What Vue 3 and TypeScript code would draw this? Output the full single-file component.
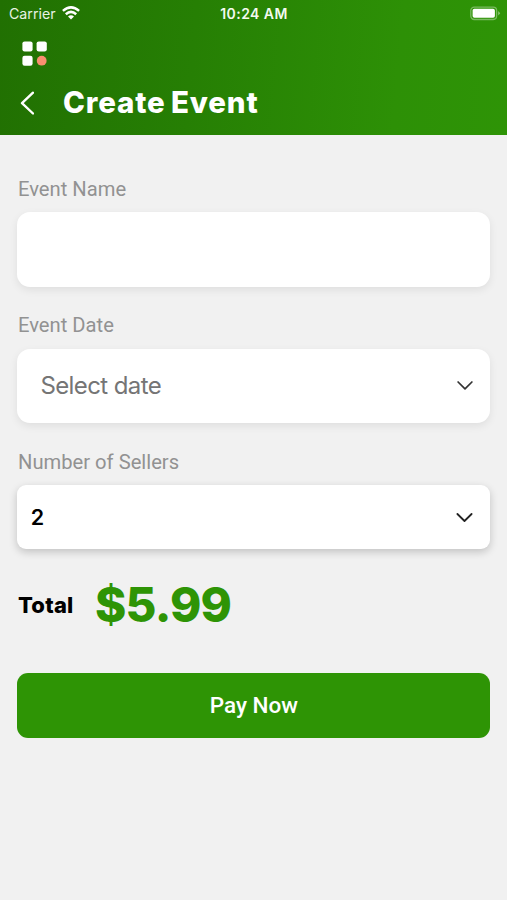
<script setup lang="ts">
import { ref } from 'vue'

const eventName = ref<string>('')
const sellers = ref<number>(2)
const total = ref<string>('$5.99')
</script>

<template>
  <div class="screen">
    <header class="header">
      <div class="status">
        <div class="carrier">
          <span class="carrier-name">Carrier</span>
          <svg class="wifi" width="18" height="14" viewBox="0 0 18 14" fill="none" stroke="#fff" stroke-width="2.5">
            <path d="M.9 4.9Q9-2.1 17.1 4.9" />
            <path d="M3.8 8.2Q9 3.6 14.2 8.2" />
            <path d="M9 13.6L6 10.5Q9 8.2 12 10.5Z" fill="#fff" stroke="none" />
          </svg>
        </div>
        <span class="time">10:24 AM</span>
        <svg class="battery" width="31" height="15" viewBox="0 0 31 15">
          <rect x=".8" y="1.1" width="25.8" height="12.4" rx="3.4" fill="none" stroke="#fff" stroke-opacity=".36" stroke-width="1.3" />
          <rect x="2.6" y="2.8" width="22.3" height="9" rx="1.8" fill="#fff" />
          <path d="M28.2 5L30.2 7.3L28.2 9.6Z" fill="#fff" fill-opacity=".45" />
        </svg>
      </div>
      <svg class="menu" width="25" height="25" viewBox="0 0 25 25" fill="#fff">
        <rect x=".4" y=".4" width="10.2" height="10" rx="2.2" />
        <rect x="14.6" y=".4" width="10.2" height="10" rx="2.2" />
        <rect x=".4" y="14.7" width="10.2" height="10" rx="2.2" />
        <circle cx="19.7" cy="19.7" r="4.9" fill="#f98f6f" />
      </svg>
      <div class="title-row">
        <svg class="back" width="14" height="24" viewBox="0 0 14 24" fill="none" stroke="#fff" stroke-width="2.4" stroke-linecap="round" stroke-linejoin="round">
          <path d="M13 1.7L2 12.1L13 22.5" />
        </svg>
        <h1 class="title">Create Event</h1>
      </div>
    </header>

    <main class="form">
      <label class="label" for="event-name">Event Name</label>
      <input id="event-name" v-model="eventName" class="field" type="text" />

      <span class="label date-label">Event Date</span>
      <div class="field">
        <span class="placeholder">Select date</span>
        <svg class="chevron" width="17" height="11" viewBox="0 0 17 11" fill="none" stroke="#333" stroke-width="1.7" stroke-linecap="round" stroke-linejoin="round">
          <path d="M2.1 2L9 8.9L15.9 2" />
        </svg>
      </div>

      <span class="label sellers-label">Number of Sellers</span>
      <div class="field compact">
        <span class="value">{{ sellers }}</span>
        <svg class="chevron" width="17" height="11" viewBox="0 0 17 11" fill="none" stroke="#222" stroke-width="1.8" stroke-linecap="round" stroke-linejoin="round">
          <path d="M1.4 2L8.5 9L15.6 2" />
        </svg>
      </div>

      <div class="total">
        <span class="total-label">Total</span>
        <span class="price">{{ total }}</span>
      </div>

      <button class="pay" type="button">Pay Now</button>
    </main>
  </div>
</template>

<style>
body {
  background: #f1f1f1;
}
</style>

<style scoped>
.screen {
  min-height: 900px;
  background: #f1f1f1;
  font-family: Roboto, sans-serif;
}
.header {
  box-sizing: border-box;
  height: 135px;
  background: linear-gradient(95deg, #217002 0%, #267f04 38%, #2d9006 78%, #2e9406 100%);
  color: #fff;
}
.status {
  display: grid;
  grid-template-columns: 1fr auto 1fr;
  align-items: center;
  height: 27px;
  padding: 0 6px 0 9px;
  font-family: Inter, sans-serif;
  font-size: 14px;
}
.carrier {
  display: flex;
  align-items: center;
  gap: 6px;
}
.carrier-name {
  color: #e8f3e4;
  font-size: 14.2px;
}
.wifi {
  margin-top: -1px;
}
.time {
  color: #f3faf0;
  font-size: 14px;
  font-weight: 600;
  letter-spacing: 0.45px;
  margin-left: -2px;
}
.battery {
  justify-self: end;
}
.menu {
  display: block;
  margin: 14px 0 0 22px;
}
.title-row {
  display: flex;
  align-items: center;
  gap: 29px;
  height: 40px;
  margin-top: 17px;
  padding-left: 20px;
}
.title {
  margin: -2px 0 0;
  font-family: Inter, sans-serif;
  font-size: 29.5px;
  font-weight: 800;
  line-height: 40px;
  letter-spacing: 0.85px;
  word-spacing: -2px;
  white-space: nowrap;
}
.form {
  display: flex;
  flex-direction: column;
  padding: 41px 16.6px 0 17.4px;
}
.label {
  padding-left: 0.6px;
  margin-bottom: 9px;
  color: #929292;
  font-size: 20.2px;
  line-height: 27px;
}
.date-label {
  margin-top: 25px;
  margin-bottom: 10px;
}
.sellers-label {
  margin-top: 26px;
}
.field {
  display: flex;
  align-items: center;
  justify-content: space-between;
  box-sizing: border-box;
  width: 100%;
  height: 74.5px;
  padding: 0 17px 0 23px;
  border: 0;
  border-radius: 13px;
  outline: 0;
  background: #fff;
  box-shadow: 0 3px 9px rgba(0, 0, 0, 0.08);
}
.placeholder {
  color: #757575;
  font-family: Inter, sans-serif;
  font-size: 24px;
  letter-spacing: -0.6px;
}
.compact {
  height: 64px;
  padding: 0 17px 0 13.4px;
  border-radius: 9px;
  box-shadow: 0 3px 8px rgba(0, 0, 0, 0.2);
}
.value {
  color: #000;
  font-family: Inter, sans-serif;
  font-size: 21.5px;
  font-weight: 600;
}
.total {
  display: flex;
  align-items: center;
  height: 60px;
  margin-top: 25px;
  font-family: Inter, sans-serif;
  font-weight: 800;
}
.total-label {
  width: 77.6px;
  padding: 1px 0 0 0.6px;
  box-sizing: border-box;
  color: #000;
  font-size: 22px;
  letter-spacing: 0.2px;
}
.price {
  color: #2e9405;
  font-size: 47.5px;
  letter-spacing: -0.8px;
}
.pay {
  height: 65px;
  margin-top: 39px;
  padding: 0 0 1px;
  border: 0;
  border-radius: 11px;
  background: #2e9405;
  color: #fff;
  font-family: Roboto, sans-serif;
  font-size: 22.5px;
  font-weight: 500;
}
</style>
